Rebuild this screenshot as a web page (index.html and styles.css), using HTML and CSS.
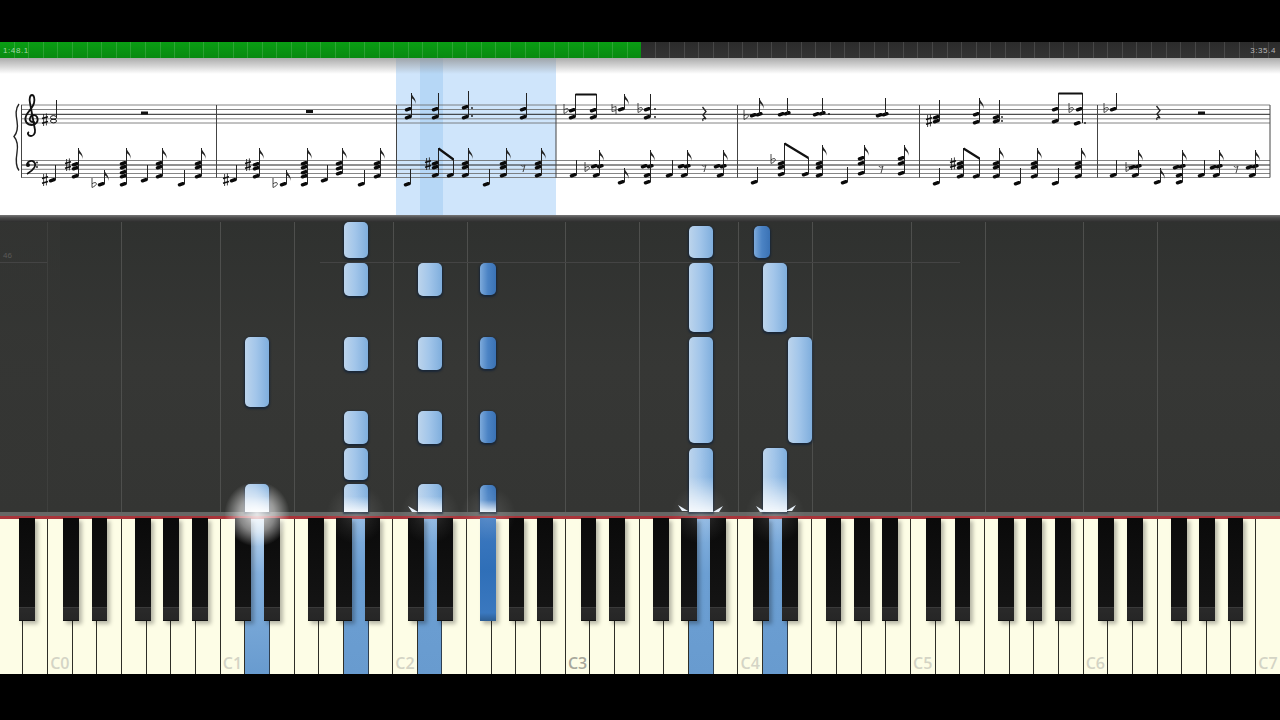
FILE: index.html
```html
<!DOCTYPE html>
<html lang="en">
<head>
<meta charset="utf-8">
<title>Piano tutorial</title>
<link rel="stylesheet" href="styles.css">
</head>
<body>
<div class="screen">
  <div class="topgap"></div>
  <div class="progress">
    <div class="played"><span class="time">1:48.1</span></div>
    <div class="rest"><span class="time total">3:35.4</span></div>
  </div>
  <div class="sheet">
    <svg class="score" width="1280" height="157" viewBox="0 58 1280 157">
      <defs>
        <linearGradient id="shade" x1="0" y1="0" x2="0" y2="1">
          <stop offset="0" stop-color="#8f8f8f" stop-opacity=".75"/>
          <stop offset="1" stop-color="#8f8f8f" stop-opacity="0"/>
        </linearGradient>
        <path id="f" d="M0 0c.6 4 5 5 4 11 0-3-2-5-4-6z" fill="#222"/>
        <g id="s" stroke="#111"><path d="M-1.4-6V6M1.4-6.6V5.4" stroke-width=".8" fill="none"/><path d="M-3 -1.6L3-3.2M-3 3.2L3 1.6" stroke-width="1.6" fill="none"/></g>
        <path id="b" d="M-2-6V3.5C0 2.6 2.5 1.200 2.400-.4 2.300-1.800.2-1.800-2-.2" fill="none" stroke="#333" stroke-width=".9"/>
        <path id="na" d="M-2-5V2.500L2 1.500M-2-1.500L2-2.500M2-2.500V5" fill="none" stroke="#333" stroke-width=".9"/>
        <path id="qr" d="M-1.500-7L2-2.500-1 1 2 5C0 4-2 4-1 7" fill="none" stroke="#222" stroke-width="1.300"/>
        <path id="er" d="M-2-3c.5 1.800 2.500 1.500 4 0L0 4" fill="none" stroke="#444" stroke-width="1"/>
      </defs>

      <rect x="396" y="58" width="160" height="157" fill="#cfe5fb"/>
      <rect x="420" y="58" width="23" height="157" fill="#b6d7f6"/>
      <rect x="0" y="58" width="1280" height="16" fill="url(#shade)"/>

      <path class="staff" d="M21 105H1270M21 109.500H1270M21 118.800H1270M21 123H1270M21 160.500H1270M21 169.300H1270M21 173.500H1270M21 177.500H1270"/>
      <path class="staff strong" d="M21 114.300H1270M21 165H1270"/>
      <path class="bars" d="M21.500 105V177.500M216.500 105V177.500M396.500 105V177.500M556 105V177.500M737.500 105V177.500M919.500 105V177.500M1097.500 105V177.500M1270 105V177.500"/>

      <path class="brace" d="M19 104c-4 5-3 11-2 17 1 6 0 12-3 15.500 3 3.500 4 10 3 16-1 6-2 13 2 18"/>
      <path class="clef" d="M35 122c-4 1-6-2-5-4 1-3 5-4 7-1 2 4-1 8-5 8-5 0-8-4-6-9 2-5 7-8 8-13 1-4 0-8-2-8-2 0-3 4-2 8l5 27c.5 4-2 6-4 6-3 0-4-3-2-4"/>
      <path class="clef" d="M27 164c1-3 5-4 7-2 3 3 0 8-7 12"/>
      <circle class="ink" cx="28" cy="165" r="2"/><circle class="ink" cx="37" cy="162.500" r=".9"/><circle class="ink" cx="37" cy="167" r=".9"/>

      <ellipse class="hollow" cx="53.500" cy="117.500" rx="3" ry="1.900"/>
      <ellipse class="hollow" cx="53.500" cy="121" rx="3" ry="1.900"/>

      <rect class="ink" x="141" y="111.500" width="7" height="3"/>
      <rect class="ink" x="306" y="110" width="7" height="3"/>
      <rect class="ink" x="1198" y="111.500" width="7" height="3"/>

      <path class="heads" d="M50.500 180.800l3.400-1.100M73.500 164.800l3.400-1.100M73.500 168.800l3.400-1.100M73.500 176.800l3.400-1.100M99.500 184.800l3.400-1.100M121.500 163.800l3.400-1.100M121.500 167.800l3.400-1.100M121.500 172.800l3.400-1.100M121.500 176.800l3.400-1.100M121.500 184.800l3.400-1.100M142.500 180.800l3.400-1.100M157.500 163.800l3.400-1.100M157.500 167.800l3.400-1.100M157.500 176.800l3.400-1.100M179.500 184.800l3.400-1.100M196.500 163.800l3.400-1.100M196.500 167.800l3.400-1.100M196.500 176.800l3.400-1.100
      M231.500 180.800l3.400-1.100M254.500 164.800l3.400-1.100M254.500 168.800l3.400-1.100M254.500 176.800l3.400-1.100M281.500 184.800l3.400-1.100M302.500 163.800l3.400-1.100M302.500 167.800l3.400-1.100M302.500 172.800l3.400-1.100M302.500 176.800l3.400-1.100M302.500 184.800l3.400-1.100M322.500 180.800l3.400-1.100M337.500 163.800l3.400-1.100M337.500 168.800l3.400-1.100M337.500 173.800l3.400-1.100M359.500 184.800l3.400-1.100M375.500 163.800l3.400-1.100M375.500 167.800l3.400-1.100M375.500 176.800l3.400-1.100
      M406.500 109.800l3.400-1.100M406.500 117.800l3.400-1.100M433.500 109.800l3.400-1.100M433.500 117.800l3.400-1.100M463.500 107.800l3.400-1.100M463.500 117.800l3.400-1.100M521.500 109.800l3.400-1.100M521.500 117.800l3.400-1.100
      M405.500 184.800l3.400-1.100M433.500 163.800l3.400-1.100M433.500 167.800l3.400-1.100M433.500 175.800l3.400-1.100M448.500 175.800l3.400-1.100M463.500 163.800l3.400-1.100M463.500 167.800l3.400-1.100M463.500 175.800l3.400-1.100M484.500 184.800l3.400-1.100M501.500 163.800l3.400-1.100M501.500 167.800l3.400-1.100M501.500 175.800l3.400-1.100M536.500 163.800l3.400-1.100M536.500 167.800l3.400-1.100M536.500 175.800l3.400-1.100
      M570.500 110.800l3.400-1.100M570.500 117.800l3.400-1.100M591.500 110.800l3.400-1.100M591.500 117.800l3.400-1.100M619.500 109.800l3.400-1.100M645.500 109.800l3.400-1.100M645.500 117.800l3.400-1.100
      M571.500 175.800l3.400-1.100M592.500 166.800l3.400-1.100M598.500 166.800l3.400-1.100M594.500 175.800l3.400-1.100M619.500 182.800l3.400-1.100M642.500 166.800l3.400-1.100M648.500 166.800l3.400-1.100M645.500 175.800l3.400-1.100M645.500 182.800l3.400-1.100M667.500 175.800l3.400-1.100M679.500 166.800l3.400-1.100M685.500 166.800l3.400-1.100M682.500 175.800l3.400-1.100M715.500 166.800l3.400-1.100M721.500 166.800l3.400-1.100M718.500 175.800l3.400-1.100
      M751.500 115.800l3.400-1.100M757.500 114.800l3.400-1.100M779.500 114.800l3.400-1.100M785.500 113.800l3.400-1.100M814.500 114.800l3.400-1.100M820.500 113.800l3.400-1.100M877.500 115.800l3.400-1.100M883.500 114.800l3.400-1.100
      M752.500 182.800l3.400-1.100M779.500 163.800l3.400-1.100M779.500 167.800l3.400-1.100M779.500 174.800l3.400-1.100M803.500 174.800l3.400-1.100M817.500 163.800l3.400-1.100M817.500 167.800l3.400-1.100M817.500 175.800l3.400-1.100M842.500 182.800l3.400-1.100M859.500 158.800l3.400-1.100M859.500 163.800l3.400-1.100M859.500 173.800l3.400-1.100M899.500 158.800l3.400-1.100M899.500 163.800l3.400-1.100M899.500 173.800l3.400-1.100
      M934.500 117.800l3.400-1.100M934.500 121.800l3.400-1.100M974.500 114.800l3.400-1.100M974.500 122.800l3.400-1.100M994.500 117.800l3.400-1.100M994.500 121.800l3.400-1.100M1053.500 109.800l3.400-1.100M1053.500 121.800l3.400-1.100M1077.500 109.800l3.400-1.100M1075.500 123.800l3.400-1.100
      M934.500 183.800l3.400-1.100M958.500 163.800l3.400-1.100M958.500 167.800l3.400-1.100M958.500 176.800l3.400-1.100M974.500 176.800l3.400-1.100M994.500 163.800l3.400-1.100M994.500 167.800l3.400-1.100M994.500 176.800l3.400-1.100M1015.500 183.800l3.400-1.100M1032.500 163.800l3.400-1.100M1032.500 167.800l3.400-1.100M1032.500 176.800l3.400-1.100M1053.500 183.800l3.400-1.100M1076.500 163.800l3.400-1.100M1076.500 167.800l3.400-1.100M1076.500 176.800l3.400-1.100
      M1111.500 109.800l3.400-1.100M1111.500 175.800l3.400-1.100M1130.500 167.800l3.400-1.100M1136.500 166.800l3.400-1.100M1133.500 175.800l3.400-1.100M1155.500 182.800l3.400-1.100M1174.500 167.800l3.400-1.100M1180.500 166.800l3.400-1.100M1177.500 175.800l3.400-1.100M1177.500 182.800l3.400-1.100M1199.500 175.800l3.400-1.100M1211.500 167.800l3.400-1.100M1217.500 166.800l3.400-1.100M1214.500 175.800l3.400-1.100M1247.500 167.800l3.400-1.100M1253.500 166.800l3.400-1.100M1250.500 175.800l3.400-1.100"/>

      <path class="stems" d="M56.500 118V100M55.500 180V165M78.500 176V148M104.500 184V170M126.500 184V148M147.500 180V165M162.500 176V148M184.500 184V170M201.500 176V148
      M236.500 180V165M259.500 176V148M286.500 184V170M307.500 184V148M327.500 180V165M342.500 173V148M364.500 184V170M380.500 176V148
      M411.500 117V93M438.500 117V93M468.500 117V91M526.500 117V93M410.500 184V169M438.500 175V148M453.500 175V159M468.500 175V148M489.500 184V169M506.500 175V148M541.500 175V148
      M575.500 117V94M596.500 117V94M624.500 109V94M650.500 117V94M576.500 175V160M599.500 175V150M624.500 182V168M650.500 182V150M672.500 175V160M687.500 175V150M723.500 175V150
      M759.500 114V98M787.500 114V98M822.500 114V98M885.500 114V98M757.500 182V167M784.500 174V143M808.500 174V158M822.500 175V145M847.500 182V167M864.500 173V145M904.500 173V145
      M939.500 121V100M979.500 122V98M999.500 121V100M1058.500 121V93M1082.500 123V93M939.500 183V168M963.500 176V148M979.500 176V158M999.500 176V148M1020.500 183V168M1037.500 176V148M1058.500 183V168M1081.500 176V148
      M1116.500 109V93M1116.500 175V160M1138.500 175V150M1160.500 182V168M1182.500 182V150M1204.500 175V160M1219.500 175V150M1255.500 175V150"/>

      <path class="beams" d="M575.500 94.500H596.500M1058.500 93.500H1082.500M438.500 148.500L453.500 159.500M784.500 143.500L808.500 158M963.500 148.500L979.500 158.500"/>

      <use href="#f" x="78.500" y="148"/><use href="#f" x="104.500" y="170"/><use href="#f" x="126.500" y="148"/><use href="#f" x="162.500" y="148"/><use href="#f" x="201.500" y="148"/>
      <use href="#f" x="259.500" y="148"/><use href="#f" x="286.500" y="170"/><use href="#f" x="307.500" y="148"/><use href="#f" x="342.500" y="148"/><use href="#f" x="380.500" y="148"/>
      <use href="#f" x="411.500" y="93"/><use href="#f" x="468.500" y="148"/><use href="#f" x="506.500" y="148"/><use href="#f" x="541.500" y="148"/>
      <use href="#f" x="624.500" y="94"/><use href="#f" x="599.500" y="150"/><use href="#f" x="624.500" y="168"/><use href="#f" x="650.500" y="150"/><use href="#f" x="687.500" y="150"/><use href="#f" x="723.500" y="150"/>
      <use href="#f" x="759.500" y="98"/><use href="#f" x="822.500" y="145"/><use href="#f" x="864.500" y="145"/><use href="#f" x="904.500" y="145"/>
      <use href="#f" x="979.500" y="98"/><use href="#f" x="999.500" y="148"/><use href="#f" x="1037.500" y="148"/><use href="#f" x="1081.500" y="148"/>
      <use href="#f" x="1138.500" y="150"/><use href="#f" x="1160.500" y="168"/><use href="#f" x="1182.500" y="150"/><use href="#f" x="1219.500" y="150"/><use href="#f" x="1255.500" y="150"/>

      <use href="#s" x="45" y="120"/><use href="#s" x="45" y="180"/><use href="#s" x="68" y="165"/><use href="#s" x="226" y="180"/><use href="#s" x="248" y="165"/>
      <use href="#s" x="428" y="164"/><use href="#s" x="929" y="121"/><use href="#s" x="953" y="164"/>
      <use href="#b" x="94" y="184"/><use href="#b" x="275" y="184"/><use href="#b" x="566" y="110"/><use href="#b" x="640" y="109"/><use href="#b" x="587" y="168"/>
      <use href="#b" x="746" y="116"/><use href="#b" x="773" y="160"/><use href="#b" x="1071" y="109"/><use href="#b" x="1106" y="109"/><use href="#b" x="1128" y="168"/>
      <use href="#na" x="614" y="109"/>

      <use href="#qr" x="704" y="114"/><use href="#qr" x="1158" y="113"/>
      <use href="#er" x="523" y="168"/><use href="#er" x="704" y="168"/><use href="#er" x="881" y="169"/><use href="#er" x="1236" y="169"/>

      <circle class="ink" cx="472" cy="108" r=".9"/><circle class="ink" cx="472" cy="116" r=".9"/><circle class="ink" cx="655" cy="109" r=".9"/><circle class="ink" cx="655" cy="117" r=".9"/>
      <circle class="ink" cx="829" cy="114" r=".9"/><circle class="ink" cx="1002" cy="117" r=".9"/><circle class="ink" cx="1002" cy="121" r=".9"/><circle class="ink" cx="1085" cy="123" r=".9"/>
    </svg>
  </div>
  <div class="divider"></div>

  <div class="fall">
    <span class="octave">46</span>
    <div class="hline"></div>

    <div class="note" style="left:344px;top:0;height:36px"></div>
    <div class="note" style="left:344px;top:41px;height:33px"></div>
    <div class="note" style="left:344px;top:115px;height:34px"></div>
    <div class="note" style="left:344px;top:189px;height:33px"></div>
    <div class="note" style="left:344px;top:226px;height:32px"></div>
    <div class="note hit" style="left:344px;top:262px;height:28px"></div>

    <div class="note" style="left:418px;top:41px;height:33px"></div>
    <div class="note" style="left:418px;top:115px;height:33px"></div>
    <div class="note" style="left:418px;top:189px;height:33px"></div>
    <div class="note hit" style="left:418px;top:262px;height:28px"></div>

    <div class="note sharp" style="left:480px;top:41px;height:32px"></div>
    <div class="note sharp" style="left:480px;top:115px;height:32px"></div>
    <div class="note sharp" style="left:480px;top:189px;height:32px"></div>
    <div class="note sharp hit" style="left:480px;top:263px;height:27px"></div>

    <div class="note" style="left:245px;top:115px;height:70px"></div>
    <div class="note hit" style="left:245px;top:262px;height:28px"></div>

    <div class="note" style="left:689px;top:4px;height:32px"></div>
    <div class="note" style="left:689px;top:41px;height:69px"></div>
    <div class="note" style="left:689px;top:115px;height:106px"></div>
    <div class="note hit" style="left:689px;top:226px;height:64px"></div>

    <div class="note sharp" style="left:754px;top:4px;height:32px"></div>
    <div class="note" style="left:763px;top:41px;height:69px"></div>
    <div class="note hit" style="left:763px;top:226px;height:64px"></div>
    <div class="note" style="left:788px;top:115px;height:106px"></div>

    <div class="glow strong" style="left:224px;top:259px"></div>
    <div class="glow" style="left:326px;top:262px"></div>
    <div class="glow" style="left:400px;top:262px"></div>
    <div class="glow faint" style="left:458px;top:262px"></div>
    <div class="glow" style="left:671px;top:262px"></div>
    <div class="glow" style="left:745px;top:262px"></div>

    <i class="spark left" style="left:408px;top:284px"></i>
    <i class="spark left" style="left:678px;top:283px"></i>
    <i class="spark right" style="left:713px;top:284px"></i>
    <i class="spark left" style="left:756px;top:284px"></i>
    <i class="spark right" style="left:786px;top:283px"></i>
  </div>

  <div class="strip"></div>
  <div class="redline"></div>

  <div class="keyboard">
    <div class="k as"></div><div class="k"></div>
    <div class="k cs"><span>C0</span></div><div class="k ds"></div><div class="k"></div><div class="k fs"></div><div class="k gs"></div><div class="k as"></div><div class="k"></div>
    <div class="k cs"><span>C1</span></div><div class="k ds on lit"></div><div class="k"></div><div class="k fs"></div><div class="k gs"></div><div class="k as on"></div><div class="k"></div>
    <div class="k cs"><span>C2</span></div><div class="k ds on"></div><div class="k"></div><div class="k fs press"></div><div class="k gs"></div><div class="k as"></div><div class="k"></div>
    <div class="k cs"><span class="dark">C3</span></div><div class="k ds"></div><div class="k"></div><div class="k fs"></div><div class="k gs"></div><div class="k as on"></div><div class="k"></div>
    <div class="k cs"><span>C4</span></div><div class="k ds on"></div><div class="k"></div><div class="k fs"></div><div class="k gs"></div><div class="k as"></div><div class="k"></div>
    <div class="k cs"><span>C5</span></div><div class="k ds"></div><div class="k"></div><div class="k fs"></div><div class="k gs"></div><div class="k as"></div><div class="k"></div>
    <div class="k cs"><span>C6</span></div><div class="k ds"></div><div class="k"></div><div class="k fs"></div><div class="k gs"></div><div class="k as"></div><div class="k"></div>
    <div class="k"><span>C7</span></div>
  </div>
</div>
</body>
</html>
```
FILE: styles.css
```css
* { box-sizing: border-box; }
html, body { margin: 0; padding: 0; background: #000; }
.screen {
  width: 1280px;
  height: 720px;
  overflow: hidden;
  display: flex;
  flex-direction: column;
  background: #000;
}
.topgap { height: 42px; flex: none; }

/* progress bar */
.progress {
  height: 16px;
  flex: none;
  display: flex;
  font: 8px "Liberation Sans", sans-serif;
  letter-spacing: .6px;
}
.played, .rest { display: flex; align-items: center; padding-top: 1px; }
.played {
  width: 641px;
  padding-left: 3px;
  color: #a3d8a6;
  background:
    repeating-linear-gradient(90deg, transparent 0 13.6px, rgba(255, 255, 255, .14) 13.6px 14.6px),
    linear-gradient(#0a9e14, #088a10);
}
.rest {
  flex: 1;
  justify-content: flex-end;
  padding-right: 4px;
  background:
    repeating-linear-gradient(90deg, transparent 0 13.6px, rgba(255, 255, 255, .12) 13.6px 14.6px),
    linear-gradient(#2b2b2b, #333);
}
.total { color: #b5b5b5; }

/* sheet music */
.sheet { height: 157px; flex: none; background: #fff; }
.score { display: block; filter: blur(.35px); }
.staff { fill: none; stroke: #666; stroke-width: .8; }
.staff.strong { stroke: #222; stroke-width: 1; }
.bars { fill: none; stroke: #444; stroke-width: 1; }
.brace { fill: none; stroke: #222; stroke-width: 1.400; }
.clef { fill: none; stroke: #111; stroke-width: 1.800; }
.hollow { fill: none; stroke: #111; stroke-width: 1; }
.heads { fill: none; stroke: #0a0a0a; stroke-width: 3.500; stroke-linecap: round; }
.stems { fill: none; stroke: #222; stroke-width: 1; }
.beams { fill: none; stroke: #111; stroke-width: 2.200; }
.ink { fill: #111; }

.divider {
  height: 7px;
  flex: none;
  background: linear-gradient(#777, #4a4a4a 40%, #2e2e2e);
}

/* falling notes */
.fall {
  height: 290px;
  flex: none;
  position: relative;
  z-index: 3;
  background:
    linear-gradient(90deg, rgba(52, 53, 51, .6) 0 60px, transparent 60px),
    repeating-linear-gradient(90deg, transparent 0 47.5px, #4e4f4d 47.5px 48.5px, transparent 48.5px 172.62px) 0 0 / 1200px 100% no-repeat,
    repeating-linear-gradient(90deg, transparent 0 121.500px, #4e4f4d 121.500px 122.500px, transparent 122.500px 172.62px),
    linear-gradient(#2f312f, #363735 50%, #343533);
}
.octave {
  position: absolute;
  left: 3px;
  top: 29px;
  font: 8px "Liberation Sans", sans-serif;
  color: #5a5a58;
}
.hline {
  position: absolute;
  left: 0;
  top: 40px;
  width: 960px;
  height: 1px;
  background: linear-gradient(90deg, #444 0 47px, transparent 47px 320px, #444 320px);
}
.note {
  position: absolute;
  width: 24px;
  border-radius: 5px;
  background: linear-gradient(90deg, #bcd4ec, #a3c6ea 45%, #7faedd);
  box-shadow: 0 1px 2px 1px rgba(16, 34, 56, .75);
}
.note.sharp {
  width: 16px;
  background: linear-gradient(90deg, #7daadb, #4b83c4 50%, #3a72b5);
}
.note.hit {
  border-radius: 5px 5px 0 0;
  background:
    linear-gradient(transparent 45%, rgba(255, 255, 255, .85)),
    linear-gradient(90deg, #bcd4ec, #a3c6ea 45%, #7faedd);
}
.note.sharp.hit {
  background:
    linear-gradient(transparent 55%, rgba(255, 255, 255, .85)),
    linear-gradient(90deg, #7daadb, #4b83c4 50%, #3a72b5);
}
.glow {
  position: absolute;
  width: 60px;
  height: 60px;
  border-radius: 50%;
  background: radial-gradient(circle, rgba(255, 255, 255, .16), rgba(255, 255, 255, .06) 40%, transparent 70%);
}
.glow.strong {
  width: 66px;
  height: 66px;
  background: radial-gradient(circle, rgba(255, 255, 255, .85), rgba(255, 255, 255, .5) 38%, transparent 70%);
}
.glow.faint { background: radial-gradient(circle, rgba(255, 255, 255, .14), transparent 65%); }
.spark {
  position: absolute;
  width: 10px;
  height: 6px;
  background: #e9f2fb;
}
.spark.left { clip-path: polygon(0 0, 100% 100%, 40% 100%); }
.spark.right { clip-path: polygon(100% 0, 60% 100%, 0 100%); }

/* keyboard */
.strip { height: 4px; flex: none; background: #666765; }
.redline { height: 3px; flex: none; background: #a8343a; }
.keyboard {
  height: 155px;
  flex: none;
  display: flex;
  margin-left: -1.35px;
  width: 1283px;
}
.k {
  flex: none;
  width: 24.66px;
  height: 100%;
  position: relative;
  display: flex;
  justify-content: center;
  align-items: flex-end;
  background: #fdfde6;
  border-right: 1px solid #2f2f28;
}
.k span {
  font: 600 16px/1 "Open Sans", sans-serif;
  color: #d4d4c5;
  padding-bottom: 3px;
}
.k span.dark { color: #a8a89c; }
.k.on { background: linear-gradient(#86b2df, #6c9fd3 35%, #689bcf); border-right-color: #2f3f50; }
.k.lit { background: linear-gradient(#c4dcf2, #85b1de 35%, #689bcf); }
.as::after, .cs::after, .ds::after, .fs::after, .gs::after {
  content: "";
  position: absolute;
  z-index: 2;
  top: -1px;
  width: 15.800px;
  height: 103px;
  background: linear-gradient(#0a0a0a, #141414 86%, #3a3a3a 86%, #3a3a3a 87%, #2a2a2a 87%, #262626 99%, #000);
  box-shadow: 3px 3px 4px rgba(0, 0, 0, .28);
}
.as::after { right: -12.900px; }
.cs::after { right: -6.900px; }
.ds::after { right: -11.200px; }
.fs::after { right: -5.400px; }
.gs::after { right: -8.900px; }
.press::after {
  background: linear-gradient(#3f7ac0, #2f6fb8 50%, #3a78bf 92%, #2d5d92);
}
```
